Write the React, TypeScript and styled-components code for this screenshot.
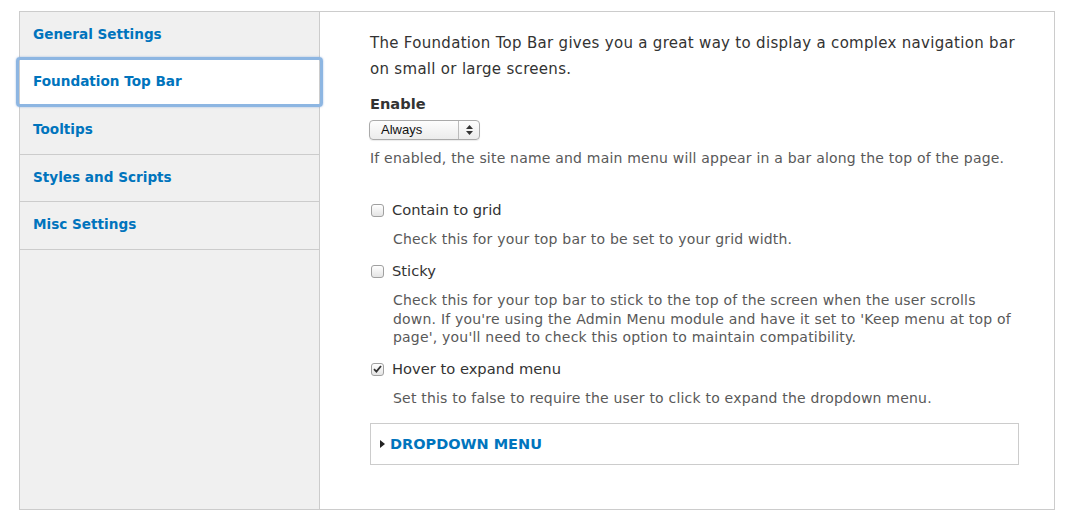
import React from "react";
import styled, { createGlobalStyle } from "styled-components";

const Global = createGlobalStyle`
  html, body { margin: 0; padding: 0; background: #fff; }
  body { font-family: "DejaVu Sans", "Lucida Grande", Verdana, sans-serif; color: #333; }
`;

const Frame = styled.div`
  margin: 11px 0 0 19px;
  width: 1036px;
  height: 499px;
  box-sizing: border-box;
  border: 1px solid #ccc;
  display: flex;
`;

const Sidebar = styled.ul`
  list-style: none;
  margin: 0;
  padding: 0;
  width: 299px;
  flex: none;
  background: #f0f0f0;
  border-right: 1px solid #ccc;
`;

const Tab = styled.li<{ $active?: boolean }>`
  height: 47.6px;
  box-sizing: border-box;
  display: flex;
  align-items: center;
  padding: 0 0 3px 13px;
  font-size: 13.6px;
  font-weight: bold;
  color: #0074bd;
  border-bottom: 1px solid #ccc;
  position: relative;
  ${(p) =>
    p.$active &&
    `
    background: #fff;
    &::after {
      content: "";
      position: absolute;
      top: -3px;
      bottom: -1px;
      left: -4px;
      right: -4px;
      border: 3px solid #8db6e2;
      border-radius: 4px;
      box-shadow: 0 0 2px rgba(90, 140, 210, 0.6);
      pointer-events: none;
    }
  `}
`;

const Main = styled.div`
  flex: 1;
  padding: 18px 35px 0 50px;
  background: #fff;
`;

const Intro = styled.p`
  margin: 0 0 12px;
  font-size: 15px;
  letter-spacing: 0.3px;
  line-height: 26px;
  color: #333;
`;

const Heading = styled.div`
  font-size: 14.6px;
  font-weight: bold;
  color: #333;
  line-height: 20px;
  margin-bottom: 6px;
`;

const SelectBox = styled.div`
  width: 111px;
  height: 20px;
  margin-left: -1px;
  box-sizing: border-box;
  border: 1px solid #aaa;
  border-radius: 4px;
  background: linear-gradient(#fdfdfd, #ececec);
  display: flex;
  align-items: stretch;
  font-family: "Liberation Sans", Arial, sans-serif;
  font-size: 13px;
  color: #111;
  box-shadow: 0 1px 1px rgba(0, 0, 0, 0.08);
`;

const SelectText = styled.span`
  flex: 1;
  padding-left: 11px;
  line-height: 18px;
`;

const SelectArrow = styled.span`
  width: 20px;
  border-left: 1px solid #bbb;
  display: flex;
  align-items: center;
  justify-content: center;
`;

const Desc = styled.div<{ $indent?: boolean }>`
  font-size: 14px;
  letter-spacing: 0.2px;
  line-height: 18.5px;
  color: #595959;
  margin: ${(p) => (p.$indent ? "10px 0 0 23px" : "9px 0 0 0")};
`;

const CheckRow = styled.label`
  display: flex;
  align-items: center;
  gap: 8px;
  font-size: 14.7px;
  color: #333;
  line-height: 20px;
`;

const Box = styled.span`
  width: 13px;
  height: 13px;
  margin-left: 1px;
  box-sizing: border-box;
  border: 1px solid #a0a0a0;
  border-radius: 3px;
  background: linear-gradient(#fff, #e4e4e4);
  display: flex;
  align-items: center;
  justify-content: center;
`;

const Item = styled.div<{ $gap: number }>`
  margin-top: ${(p) => p.$gap}px;
`;

const Fieldset = styled.div`
  margin-top: 15px;
  width: 649px;
  height: 42px;
  box-sizing: border-box;
  border: 1px solid #ccc;
  display: flex;
  align-items: center;
  padding-left: 9px;
  gap: 5px;
  font-size: 14.5px;
  font-weight: bold;
  color: #0074bd;
  text-transform: uppercase;
`;

const tabs = [
  "General Settings",
  "Foundation Top Bar",
  "Tooltips",
  "Styles and Scripts",
  "Misc Settings",
];

export default function App() {
  return (
    <>
      <Global />
      <Frame>
        <Sidebar>
          {tabs.map((t, i) => (
            <Tab key={t} $active={i === 1}>
              {t}
            </Tab>
          ))}
        </Sidebar>
        <Main>
          <Intro>
            The Foundation Top Bar gives you a great way to display a complex navigation bar
            on small or large screens.
          </Intro>
          <Heading>Enable</Heading>
          <SelectBox>
            <SelectText>Always</SelectText>
            <SelectArrow>
              <svg width="7" height="10" viewBox="0 0 7 10">
                <path d="M3.5 0 L7 4 H0 Z M0 6 H7 L3.5 10 Z" fill="#333" />
              </svg>
            </SelectArrow>
          </SelectBox>
          <Desc>If enabled, the site name and main menu will appear in a bar along the top of the page.</Desc>

          <Item $gap={32.5}>
            <CheckRow>
              <Box />
              Contain to grid
            </CheckRow>
            <Desc $indent>Check this for your top bar to be set to your grid width.</Desc>
          </Item>

          <Item $gap={12.5}>
            <CheckRow>
              <Box />
              Sticky
            </CheckRow>
            <Desc $indent>
              Check this for your top bar to stick to the top of the screen when the user scrolls
              down. If you're using the Admin Menu module and have it set to 'Keep menu at top of
              page', you'll need to check this option to maintain compatibility.
            </Desc>
          </Item>

          <Item $gap={12.5}>
            <CheckRow>
              <Box>
                <svg width="9" height="8" viewBox="0 0 9 8">
                  <path d="M1 4.2 L3.4 6.6 L8 1" stroke="#333" strokeWidth="1.8" fill="none" />
                </svg>
              </Box>
              Hover to expand menu
            </CheckRow>
            <Desc $indent>Set this to false to require the user to click to expand the dropdown menu.</Desc>
          </Item>

          <Fieldset>
            <svg width="5" height="8" viewBox="0 0 5 8">
              <path d="M0 0 L5 4 L0 8 Z" fill="#222" />
            </svg>
            Dropdown menu
          </Fieldset>
        </Main>
      </Frame>
    </>
  );
}
